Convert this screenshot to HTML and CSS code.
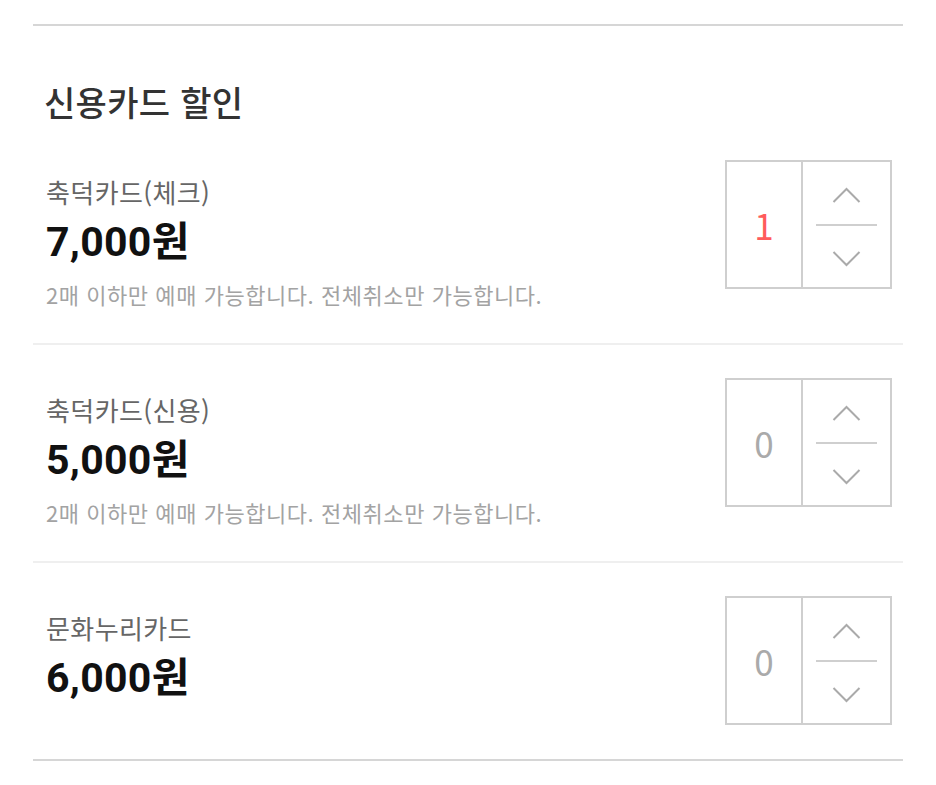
FILE: index.html
```html
<!DOCTYPE html>
<html lang="ko">
<head>
    <meta charset="UTF-8">
    <meta name="viewport" content="width=device-width, initial-scale=1.0">
    <title>신용카드 할인</title>
    <link rel="stylesheet" href="styles.css">
</head>
<body>

<div class="discount">
    <h2 class="discount-title">신용카드 할인</h2>

    <div class="card-row">
        <div class="card-info">
            <p class="card-name">축덕카드(체크)</p>
            <p class="card-price">7,000원</p>
            <p class="card-note">2매 이하만 예매 가능합니다. 전체취소만 가능합니다.</p>
        </div>
        <div class="stepper">
            <div class="stepper-count active">1</div>
            <div class="stepper-buttons">
                <button class="stepper-btn" aria-label="증가">
                    <svg width="29" height="16" viewBox="0 0 29 16"><path d="M1.5 15 L14.5 2 L27.5 15" /></svg>
                </button>
                <span class="stepper-line"></span>
                <button class="stepper-btn" aria-label="감소">
                    <svg width="29" height="16" viewBox="0 0 29 16"><path d="M1.5 1 L14.5 14 L27.5 1" /></svg>
                </button>
            </div>
        </div>
    </div>

    <div class="card-row">
        <div class="card-info">
            <p class="card-name">축덕카드(신용)</p>
            <p class="card-price">5,000원</p>
            <p class="card-note">2매 이하만 예매 가능합니다. 전체취소만 가능합니다.</p>
        </div>
        <div class="stepper">
            <div class="stepper-count">0</div>
            <div class="stepper-buttons">
                <button class="stepper-btn" aria-label="증가">
                    <svg width="29" height="16" viewBox="0 0 29 16"><path d="M1.5 15 L14.5 2 L27.5 15" /></svg>
                </button>
                <span class="stepper-line"></span>
                <button class="stepper-btn" aria-label="감소">
                    <svg width="29" height="16" viewBox="0 0 29 16"><path d="M1.5 1 L14.5 14 L27.5 1" /></svg>
                </button>
            </div>
        </div>
    </div>

    <div class="card-row">
        <div class="card-info">
            <p class="card-name">문화누리카드</p>
            <p class="card-price">6,000원</p>
        </div>
        <div class="stepper">
            <div class="stepper-count">0</div>
            <div class="stepper-buttons">
                <button class="stepper-btn" aria-label="증가">
                    <svg width="29" height="16" viewBox="0 0 29 16"><path d="M1.5 15 L14.5 2 L27.5 15" /></svg>
                </button>
                <span class="stepper-line"></span>
                <button class="stepper-btn" aria-label="감소">
                    <svg width="29" height="16" viewBox="0 0 29 16"><path d="M1.5 1 L14.5 14 L27.5 1" /></svg>
                </button>
            </div>
        </div>
    </div>
</div>

</body>
</html>
```

FILE: styles.css
```css
body {
    background-color: #fff;
    font-family: "Noto Sans CJK KR", "Noto Sans", sans-serif;
    margin: 0;
    padding: 24px 33px 0;
}
p {
    margin: 0;
}
.discount {
    border-top: 2px solid #d6d6d6;
    border-bottom: 2px solid #d6d6d6;
}
.discount-title {
    margin: 53px 0 2px;
    padding-left: 11px;
    font-size: 34px;
    line-height: 46px;
    font-weight: 500;
    letter-spacing: 0.3px;
    color: #333;
}
.card-row {
    display: flex;
    justify-content: space-between;
    align-items: flex-start;
    padding: 33px 11px 34px 13px;
    border-top: 2px solid #efefef;
}
.card-row:first-of-type {
    border-top: none;
}
.card-info {
    margin-top: 14px;
}
.card-name {
    font-size: 26px;
    line-height: 36px;
    letter-spacing: 0.4px;
    color: #666;
}
.card-price {
    margin-top: 8px;
    font-family: Roboto, "Noto Sans CJK KR", sans-serif;
    font-size: 41px;
    line-height: 48px;
    font-weight: bold;
    letter-spacing: 0.3px;
    color: #111;
}
.card-note {
    margin-top: 13px;
    font-size: 22px;
    line-height: 30px;
    letter-spacing: 0.55px;
    color: #a3a3a3;
}
.stepper {
    display: flex;
    width: 167px;
    height: 129px;
    box-sizing: border-box;
    border: 2px solid #cfcfcf;
}
.stepper-count {
    width: 74px;
    border-right: 2px solid #cfcfcf;
    display: flex;
    align-items: center;
    justify-content: center;
    font-size: 35px;
    color: #aaa;
}
.stepper-count.active {
    color: #ff5b5b;
}
.stepper-buttons {
    flex: 1;
    display: flex;
    flex-direction: column;
}
.stepper-btn {
    flex: 1;
    display: flex;
    align-items: center;
    justify-content: center;
    padding: 5px 0 0;
    background: none;
    border: none;
    cursor: pointer;
}
.stepper-btn svg path {
    fill: none;
    stroke: #aaa;
    stroke-width: 2;
}
.stepper-line {
    display: block;
    height: 2px;
    margin: 0 13px;
    background-color: #cfcfcf;
}
```
